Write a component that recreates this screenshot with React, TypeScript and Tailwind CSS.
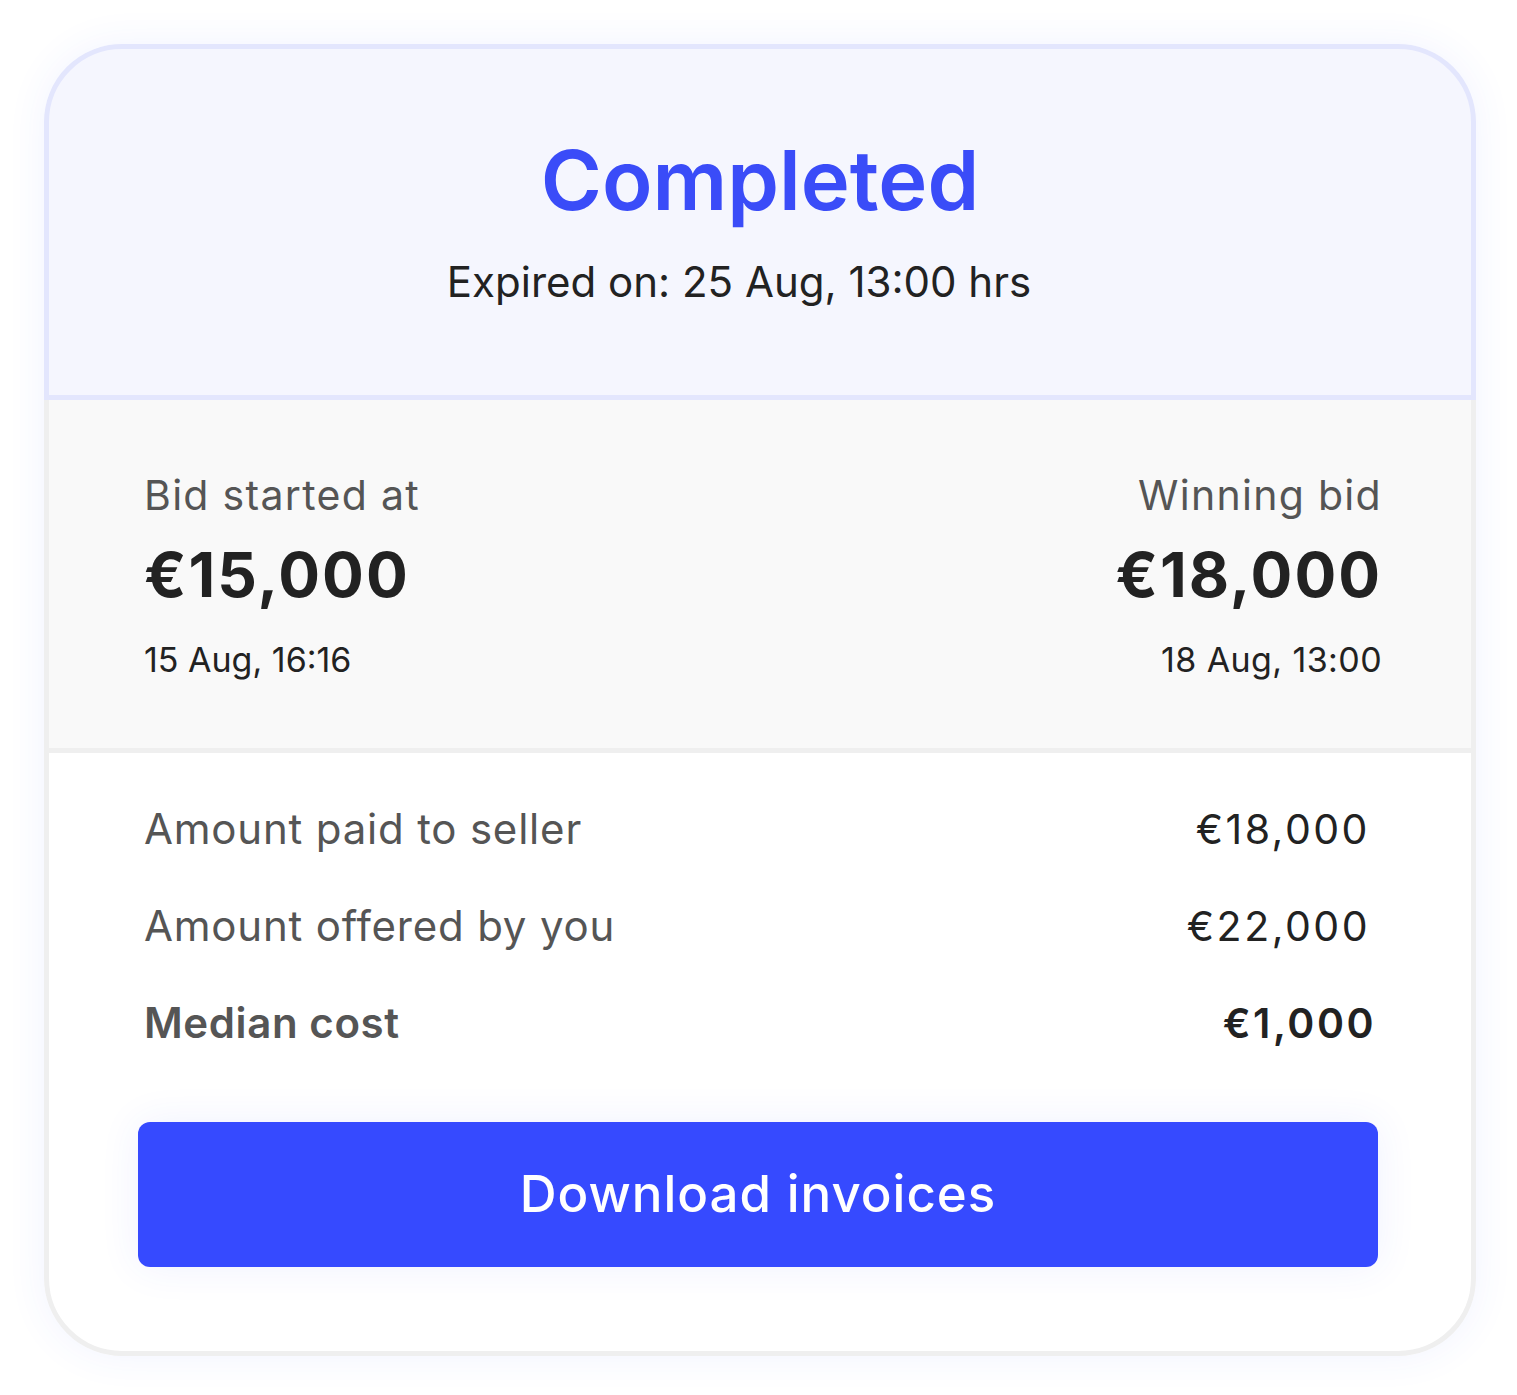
import React from "react";

const font = { fontFamily: "Inter, 'Noto Sans', sans-serif" };

export default function App() {
  return (
    <div className="min-h-[1395px] w-[1517px] bg-white" style={font}>
      <div className="pt-[44px] pl-[44px]">
        <div className="w-[1432px] rounded-[78px] shadow-[0_0_40px_rgba(60,80,255,0.07)]">
          {/* Header */}
          <div className="rounded-t-[78px] border-[5px] border-[#e3e6fd] bg-[#f5f6fe] pt-[89px] pb-[92px] text-center">
            <div className="text-[83px] leading-[84px] font-semibold text-[#3a4cf8]">Completed</div>
            <div className="mt-[39px] pr-[42px] text-[42px] leading-[42px] text-[#222222]">Expired on: 25 Aug, 13:00 hrs</div>
          </div>
          {/* Bids */}
          <div className="border-x-[5px] border-[#efefef] bg-[#f9f9f9] pl-[95px] pr-[89px] pt-[74px] pb-[70px] flex justify-between">
            <div className="flex flex-col items-start">
              <div className="text-[41px] leading-[42px] tracking-[1.3px] text-[#555555]">Bid started at</div>
              <div className="mt-[27px] text-[62px] leading-[64px] tracking-[2px] font-bold text-[#222222]">€15,000</div>
              <div className="mt-[35px] text-[34px] leading-[36px] text-[#222222]">15 Aug, 16:16</div>
            </div>
            <div className="flex flex-col items-end">
              <div className="text-[41px] leading-[42px] tracking-[1.3px] text-[#555555]">Winning bid</div>
              <div className="mt-[27px] text-[62px] leading-[64px] tracking-[2px] font-bold text-[#222222]">€18,000</div>
              <div className="mt-[35px] text-[34px] leading-[36px] tracking-[0.4px] text-[#222222]">18 Aug, 13:00</div>
            </div>
          </div>
          {/* Details */}
          <div className="rounded-b-[78px] border-[5px] border-[#efefef] bg-white pt-[55px] pb-[84px]">
            <div className="pl-[95px] pr-[101px] flex flex-col gap-[55px]">
              <div className="flex justify-between items-baseline">
                <span className="text-[42px] leading-[42px] tracking-[0.8px] text-[#555555]">Amount paid to seller</span>
                <span className="text-[41px] leading-[42px] tracking-[2.5px] text-[#222222]">€18,000</span>
              </div>
              <div className="flex justify-between items-baseline">
                <span className="text-[42px] leading-[42px] tracking-[0.8px] text-[#555555]">Amount offered by you</span>
                <span className="text-[41px] leading-[42px] tracking-[2.5px] text-[#222222]">€22,000</span>
              </div>
              <div className="flex justify-between items-baseline">
                <span className="text-[42px] leading-[42px] tracking-[0.6px] font-semibold text-[#555555]">Median cost</span>
                <span className="text-[41px] leading-[42px] tracking-[2.5px] font-semibold text-[#222222] -mr-[6px]">€1,000</span>
              </div>
            </div>
            <div className="mt-[78px] pl-[89px] pr-[93px]">
              <button className="w-full h-[145px] rounded-[12px] bg-[#364aff] text-white text-[51px] tracking-[1px] font-medium shadow-[0_0_40px_rgba(54,74,255,0.08)]">
                Download invoices
              </button>
            </div>
          </div>
        </div>
      </div>
    </div>
  );
}
